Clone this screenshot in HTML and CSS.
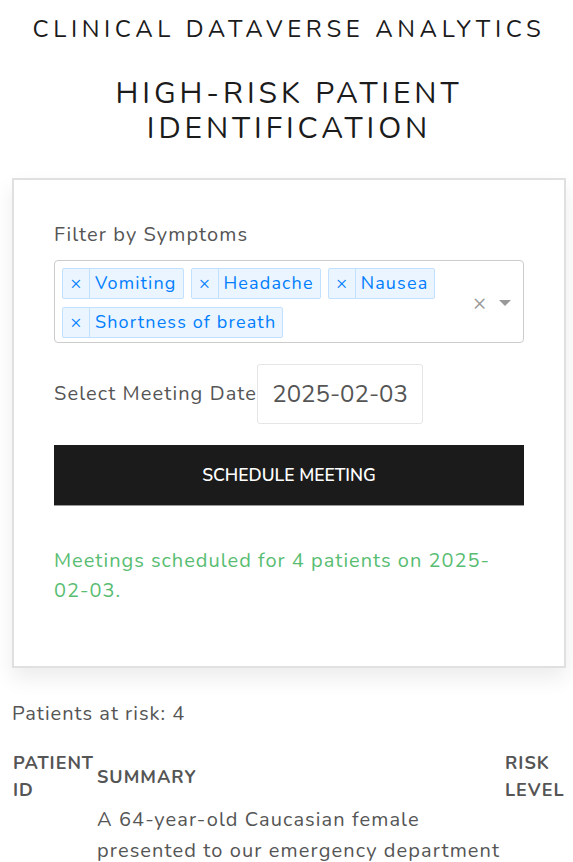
FILE: index.html
```html
<!DOCTYPE html>
<html>
<head>
<meta charset="utf-8">
<link rel="stylesheet" href="styles.css">
</head>
<body>
<div class="page">
  <h1 class="brand">CLINICAL DATAVERSE ANALYTICS</h1>
  <h2 class="title">HIGH-RISK PATIENT IDENTIFICATION</h2>
  <div class="card">
    <label class="label">Filter by Symptoms</label>
    <div class="select">
      <div class="tags">
        <span class="tag"><span class="tag-x">×</span><span class="tag-label">Vomiting</span></span>
        <span class="tag"><span class="tag-x">×</span><span class="tag-label">Headache</span></span>
        <span class="tag"><span class="tag-x">×</span><span class="tag-label">Nausea</span></span>
        <span class="tag"><span class="tag-x">×</span><span class="tag-label">Shortness of breath</span></span>
      </div>
      <span class="clear">×</span>
      <span class="arrow"></span>
    </div>
    <div class="date-row">
      <span class="label inline">Select Meeting Date</span>
      <div class="date-input">2025-02-03</div>
    </div>
    <button class="btn">SCHEDULE MEETING</button>
    <p class="success">Meetings scheduled for 4 patients on 2025-02-03.</p>
  </div>
  <p class="count">Patients at risk: 4</p>
  <table class="tbl">
    <thead>
      <tr><th class="c-id">PATIENT ID</th><th class="c-sum">SUMMARY</th><th class="c-risk">RISK LEVEL</th></tr>
    </thead>
    <tbody>
      <tr><td></td><td>A 64-year-old Caucasian female presented to our emergency department with a history of nausea, vomiting and shortness of breath.</td><td></td></tr>
    </tbody>
  </table>
</div>
</body>
</html>
```
FILE: styles.css
```css
* { box-sizing: border-box; }
html, body { margin: 0; padding: 0; background: #fff; }
body {
  font-family: "Nunito", "Open Sans", sans-serif;
  color: #555;
  overflow: hidden;
}
.page { padding: 0 7px 0 12px; }
.brand {
  margin: 0;
  padding-top: 14px;
  font-weight: 400;
  font-size: 24px;
  letter-spacing: 4.6px;
  text-align: center;
  color: #1b1b1b;
  line-height: 30px;
}
.title {
  margin: 31.5px 0 0;
  font-weight: 400;
  font-size: 30px;
  letter-spacing: 3.9px;
  text-align: center;
  color: #1b1b1b;
  line-height: 35px;
}
.card {
  margin-top: 32.5px;
  border: 2px solid #e0e0e0;
  box-shadow: 0 10px 20px rgba(0,0,0,0.08);
  padding: 40px 40px 60px;
  background: #fff;
}
.label {
  display: block;
  font-size: 20px;
  letter-spacing: 1.1px;
  color: #555;
  line-height: 30px;
  margin-bottom: 10px;
}
.label.inline { display: inline-block; margin: 0; }
.select {
  border: 1px solid #ccc;
  border-radius: 4px;
  display: flex;
  align-items: center;
  padding: 7px 0 4px 7px;
}
.tags { flex: 1; display: flex; flex-wrap: wrap; gap: 8px 7px; }
.tag {
  display: inline-flex;
  background: #ebf5ff;
  border: 1px solid #c2e0ff;
  border-radius: 2px;
  color: #007eff;
  font-size: 18px;
  letter-spacing: 1.15px;
  line-height: 29px;
}
.tag-x {
  width: 27px;
  text-align: center;
  border-right: 1px solid #c2e0ff;
  font-size: 18px;
  letter-spacing: 0;
}
.tag-label { padding: 0 6px 0 5px; }
.clear { color: #999; font-size: 22px; width: 20px; margin-right: 6px; }
.arrow {
  width: 0; height: 0;
  border-left: 6px solid transparent;
  border-right: 6px solid transparent;
  border-top: 6px solid #999;
  margin-right: 12px;
}
.date-row {
  display: flex;
  align-items: center;
  margin-top: 21px;
}
.date-input {
  border: 1px solid #e5e5e5;
  border-radius: 3px;
  height: 60px;
  width: 166px;
  display: flex;
  align-items: center;
  justify-content: center;
  font-size: 24px;
  color: #555;
}
.btn {
  margin-top: 21px;
  width: 100%;
  height: 61px;
  background: #1b1b1b;
  color: #fff;
  border: none;
  border-bottom: 1px solid #999;
  font-family: inherit;
  font-weight: 600;
  font-size: 17.5px;
  letter-spacing: 0;
}
.success {
  margin: 40px 0 0;
  color: #58bd72;
  font-size: 20px;
  line-height: 30px;
  letter-spacing: 1px;
}
.count {
  margin: 33px 0 0;
  font-size: 20px;
  letter-spacing: 1px;
  line-height: 26px;
}
.tbl {
  margin-top: 23px;
  border-collapse: collapse;
  width: 100%;
}
.tbl th {
  text-align: left;
  font-weight: 700;
  font-size: 18px;
  letter-spacing: 1px;
  color: #555;
  line-height: 27px;
  padding: 0 1px;
  vertical-align: middle;
}
.c-id { width: 84px; }
.c-risk { width: 62px; }
.tbl td {
  font-size: 20px;
  letter-spacing: 1.1px;
  line-height: 31px;
  padding: 0 1px;
  vertical-align: top;
}
```
